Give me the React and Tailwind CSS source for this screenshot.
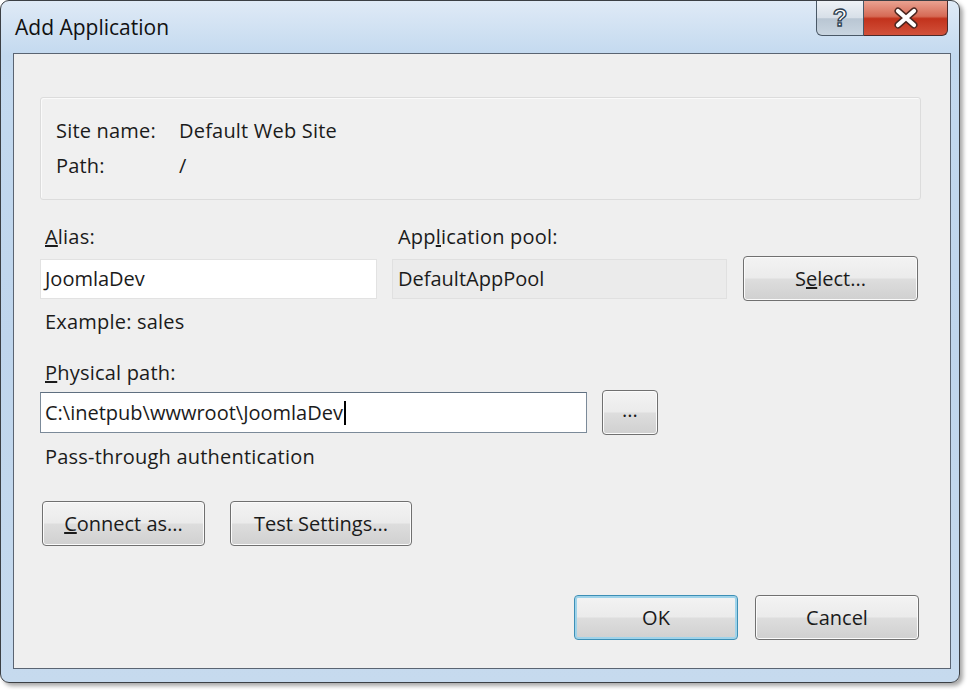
import React from 'react';

const font = { fontFamily: '"Open Sans", "Noto Sans", "Liberation Sans", sans-serif' };

const Btn = ({ children, className = '', focused = false }) => (
  <button
    className={`flex h-[45px] items-center justify-center rounded-[4px] border text-[20px] text-[#1b1b1b] ${
      focused
        ? 'border-[#3d8fb5] shadow-[inset_0_0_0_2px_#9fd3ea]'
        : 'border-[#707070] shadow-[inset_0_0_0_1px_#fbfbfb]'
    } bg-[linear-gradient(#f3f3f3_0%,#ebebeb_48%,#dddddd_52%,#d0d0d0_100%)] ${className}`}
  >
    {children}
  </button>
);

const Label = ({ children, className = '' }) => (
  <div className={`h-6 text-[20px] leading-6 tracking-[0.2px] text-[#1b1b1b] ${className}`}>{children}</div>
);

export default function App() {
  return (
    <div className="h-[690px] w-[970px] overflow-hidden bg-white" style={font}>
      <div className="relative flex h-[683px] w-[960px] flex-col rounded-[9px] border border-[#3b3f44] bg-[linear-gradient(180deg,#dfeaf6_0%,#c3d9ef_8%,#bfd5ec_50%,#c6daee_100%)] pb-[13px] pl-[12px] pr-[8px] shadow-[3px_3px_4px_rgba(0,0,0,0.35)]">
        {/* title bar */}
        <div className="flex h-[52px] items-start justify-between">
          <div className="pl-[2px] pt-[12px] text-[21px] leading-7 text-[#111]">Add Application</div>
          <div className="mr-[3px] flex">
            <div className="flex h-[35px] w-[48px] items-center justify-center rounded-bl-[6px] border border-t-0 border-[#4a5866] bg-[linear-gradient(#eef2f6_0%,#d7dfe8_50%,#b9c6d3_52%,#c9d5e0_100%)]">
              <svg width="24" height="30" viewBox="0 0 24 30">
                <text x="12" y="23" textAnchor="middle" fontSize="24" fontFamily="Liberation Sans, sans-serif" fontWeight="bold" fill="#ffffff" stroke="#2c3e50" strokeWidth="1.3">?</text>
              </svg>
            </div>
            <div className="flex h-[35px] w-[84px] items-center justify-center rounded-br-[6px] border border-t-0 border-l-0 border-[#4a2a2a] bg-[linear-gradient(#e9a291_0%,#d66a55_45%,#c2321c_52%,#d2513a_100%)]">
              <svg width="30" height="22" viewBox="0 0 30 22">
                <path d="M7 4 L23 18 M23 4 L7 18" stroke="#4a2620" strokeWidth="7" strokeLinecap="round" />
                <path d="M7 4 L23 18 M23 4 L7 18" stroke="#ffffff" strokeWidth="4.2" strokeLinecap="round" />
              </svg>
            </div>
          </div>
        </div>

        {/* client area */}
        <div className="flex flex-1 flex-col border border-[#5a6472] bg-[#efefef] pl-[26px] pr-[31px]">
          <div className="mt-[43px] flex h-[103px] w-[881px] flex-col justify-center gap-[11px] rounded-[3px] border border-[#dcdcdc] bg-[#f0f0f0] pl-[15px] shadow-[inset_1px_1px_0_#fafafa]">
            <div className="flex">
              <Label className="w-[123px]">Site name:</Label>
              <Label>Default Web Site</Label>
            </div>
            <div className="flex">
              <Label className="w-[123px]">Path:</Label>
              <Label>/</Label>
            </div>
          </div>

          <div className="mt-[25px] flex">
            <Label className="w-[352px] pl-[5px]"><span className="underline">A</span>lias:</Label>
            <Label className="pl-[6px]">App<span className="underline">l</span>ication pool:</Label>
          </div>

          <div className="mt-[7px] flex h-[45px] items-center">
            <div className="flex h-[40px] w-[337px] items-center border border-[#e2e2e2] bg-white pl-[4px] text-[20px] text-[#1b1b1b]">JoomlaDev</div>
            <div className="ml-[15px] flex h-[40px] w-[335px] items-center border border-[#e0e0e0] bg-[#ebebeb] pl-[5px] text-[20px] text-[#1b1b1b]">DefaultAppPool</div>
            <Btn className="ml-[16px] w-[175px]">S<span className="underline">e</span>lect...</Btn>
          </div>

          <Label className="mt-[9px] pl-[5px]">Example: sales</Label>

          <Label className="mt-[27px] pl-[5px]"><span className="underline">P</span>hysical path:</Label>

          <div className="mt-[5px] flex h-[45px] items-center">
            <div className="flex h-[41px] w-[547px] items-center border border-[#7b8a99] border-t-[#5f6f80] bg-white pl-[4px] text-[20px] text-[#1b1b1b]">
              C:\inetpub\wwwroot\JoomlaDev<span className="ml-[1px] inline-block h-[24px] w-[2px] bg-black" />
            </div>
            <Btn className="ml-[15px] w-[56px] pb-[6px] text-[16px]">...</Btn>
          </div>

          <Label className="mt-[10px] pl-[5px]">Pass-through authentication</Label>

          <div className="mt-[32px] flex pl-[2px]">
            <Btn className="w-[163px]"><span className="underline">C</span>onnect as...</Btn>
            <Btn className="ml-[25px] w-[182px]">Test Settin<span className="underline">g</span>s...</Btn>
          </div>

          <div className="mt-[49px] flex justify-end gap-[17px]">
            <Btn focused className="w-[164px]">OK</Btn>
            <Btn className="w-[164px]">Cancel</Btn>
          </div>
        </div>
      </div>
    </div>
  );
}
